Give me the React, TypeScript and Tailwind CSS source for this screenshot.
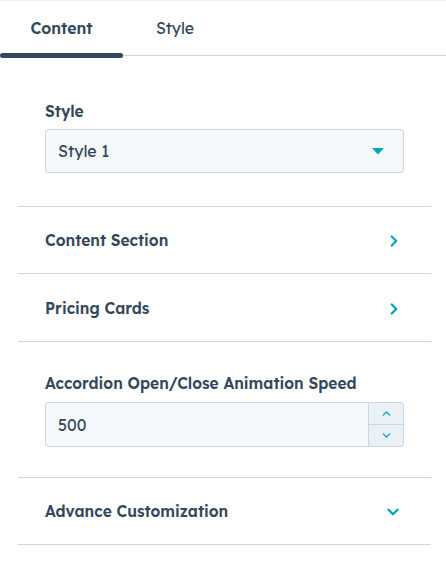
import { ChevronRight, ChevronDown, ChevronUp } from "lucide-react"

const font = { fontFamily: "'Lexend Deca', Inter, 'Noto Sans', sans-serif" }

function RowHeader({ title, open }: { title: string; open?: boolean }) {
	return (
		<div className="h-[67px] border-b border-[#cbd6e2] px-[27px] pt-[2px] flex items-center justify-between">
			<span className="text-[15.5px] font-semibold text-[#33475b]">{title}</span>
			{open ? (
				<ChevronDown size={18} strokeWidth={3} className="text-[#00a4bd] mr-[2px]" />
			) : (
				<ChevronRight size={18} strokeWidth={3} className="text-[#00a4bd] mr-[1px] -mt-[1px]" />
			)}
		</div>
	)
}

export default function App() {
	return (
		<div className="w-[446px] h-[569px] bg-white border-t border-[#f0f3f6] overflow-hidden" style={font}>
			{/* Tabs */}
			<div className="flex h-[55px] border-b border-[#cbd6e2]">
				<button className="relative w-[123px] flex items-center justify-center pt-[1px] text-[15.8px] font-semibold text-[#33475b]">
					Content
					<span className="absolute left-0 right-0 -bottom-[3px] h-[5px] rounded-full bg-[#33475b]" />
				</button>
				<button className="w-[104px] flex items-center justify-center pt-[1px] text-[15.8px] text-[#33475b]">
					Style
				</button>
			</div>

			<div className="mx-[18px] mr-[15px]">
				{/* Style select */}
				<div className="pt-[45px] pb-[33px] px-[27px] border-b border-[#cbd6e2]">
					<div className="text-[15.5px] leading-5 font-semibold text-[#33475b] mb-[8px]">Style</div>
					<div className="h-[44px] rounded-[3px] border border-[#cbd6e2] bg-[#f5f8fa] flex items-center justify-between pl-[12px] pr-[19px]">
						<span className="text-[16px] text-[#33475b]">Style 1</span>
						<svg width="12" height="7" viewBox="0 0 12 7">
							<path d="M0 0h12L6 6.5z" fill="#00a4bd" />
						</svg>
					</div>
				</div>

				<RowHeader title="Content Section" />
				<div className="h-[1px]" />
				<RowHeader title="Pricing Cards" />

				{/* Animation speed */}
				<div className="pt-[31px] pb-[30px] px-[27px] border-b border-[#cbd6e2]">
					<div className="text-[15.5px] leading-5 font-semibold text-[#33475b] mb-[9px]">
						Accordion Open/Close Animation Speed
					</div>
					<div className="h-[45px] rounded-[3px] border border-[#cbd6e2] bg-[#f5f8fa] flex">
						<div className="flex-1 flex items-center pl-[12px] text-[16px] text-[#33475b]">500</div>
						<div className="w-[35px] border-l border-[#cbd6e2] bg-[#eaf0f6] flex flex-col rounded-r-[3px]">
							<div className="flex-1 flex items-center justify-center border-b border-[#cbd6e2]">
								<ChevronUp size={13} strokeWidth={2.5} className="text-[#00a4bd]" />
							</div>
							<div className="flex-1 flex items-center justify-center">
								<ChevronDown size={13} strokeWidth={2.5} className="text-[#00a4bd]" />
							</div>
						</div>
					</div>
				</div>

				<RowHeader title="Advance Customization" open />
			</div>
		</div>
	)
}
